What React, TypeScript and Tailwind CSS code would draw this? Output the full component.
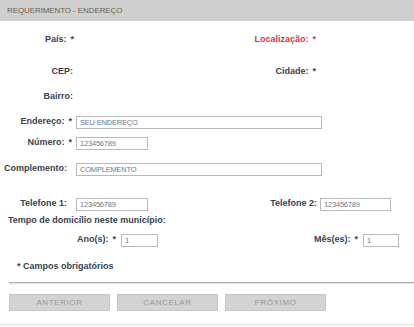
const label = 'text-[9px] font-bold text-[#38424f] whitespace-nowrap'
const req = 'ml-[4px] text-[#38424f]'
const input =
  'h-[13px] border border-[#b9b9b9] bg-white px-[3px] text-[7.5px] tracking-[-0.2px] leading-[11px] text-[#6b7a92] outline-none'

function Field({ value, w }: { value: string; w: string }) {
  return <input readOnly value={value} className={`${input} ${w}`} />
}

export default function App() {
  return (
    <div
      className="w-[414px] h-[327px] bg-white overflow-hidden"
      style={{ fontFamily: '"Liberation Sans", Arial, sans-serif' }}
    >
      <div className="h-[21px] bg-[#cfcfcf] flex items-center pl-[7px]">
        <span className="text-[8px] tracking-[-0.1px] text-[#6f6549]">REQUERIMENTO - ENDEREÇO</span>
      </div>

      {/* País / Localização */}
      <div className="mt-[10px] h-[18px] flex items-center">
        <div className={`w-[74px] text-right ${label}`}>
          País:<span className={req}>*</span>
        </div>
        <div className={`w-[242px] text-right ${label} !text-[#d23b3b]`}>
          Localização:<span className="ml-[4px]">*</span>
        </div>
      </div>

      {/* CEP / Cidade */}
      <div className="mt-[14px] h-[18px] flex items-center">
        <div className={`w-[73px] text-right ${label}`}>CEP:</div>
        <div className={`w-[243px] text-right ${label}`}>
          Cidade:<span className={req}>*</span>
        </div>
      </div>

      {/* Bairro */}
      <div className="mt-[7px] h-[18px] flex items-center">
        <div className={`w-[73px] text-right ${label}`}>Bairro:</div>
      </div>

      {/* Endereço */}
      <div className="mt-[8px] h-[16px] flex items-center">
        <div className={`w-[76px] pr-[4px] text-right ${label}`}>
          Endereço:<span className={req}>*</span>
        </div>
        <Field value="SEU ENDEREÇO" w="w-[246px]" />
      </div>

      {/* Número */}
      <div className="mt-[5px] h-[16px] flex items-center">
        <div className={`w-[76px] pr-[4px] text-right ${label}`}>
          Número:<span className={req}>*</span>
        </div>
        <Field value="123456789" w="w-[72px]" />
      </div>

      {/* Complemento */}
      <div className="mt-[10px] h-[16px] flex items-center">
        <div className={`w-[76px] pr-[9px] text-right ${label}`}>Complemento:</div>
        <Field value="COMPLEMENTO" w="w-[246px]" />
      </div>

      {/* Telefones */}
      <div className="mt-[19px] h-[16px] flex items-center">
        <div className={`w-[76px] pr-[9px] text-right ${label}`}>Telefone 1:</div>
        <Field value="123456789" w="w-[72px]" />
        <div className={`w-[172px] pr-[3px] text-right ${label}`}>Telefone 2:</div>
        <Field value="123456789" w="w-[71px]" />
      </div>

      <div className="mt-[2px] h-[14px] flex items-center pl-[8px]">
        <span className={label}>Tempo de domicílio neste município:</span>
      </div>

      {/* Ano / Mês */}
      <div className="mt-[4px] h-[16px] flex items-center">
        <div className={`w-[121px] pr-[5px] text-right ${label}`}>
          Ano(s):<span className={req}>*</span>
        </div>
        <Field value="1" w="w-[37px]" />
        <div className={`w-[205px] pr-[5px] text-right ${label}`}>
          Mês(es):<span className={req}>*</span>
        </div>
        <Field value="1" w="w-[36px]" />
      </div>

      <div className="mt-[11px] h-[16px] flex items-center pl-[17px]">
        <span className={label}>* Campos obrigatórios</span>
      </div>

      <div className="mt-[7px] ml-[9px] h-[2px] bg-[#b3b3b3] border-b border-[#dedede]" />

      <div className="mt-[10px] flex gap-[7px] pl-[9px]">
        {['ANTERIOR', 'CANCELAR', 'PRÓXIMO'].map((b) => (
          <button
            key={b}
            className="w-[101px] h-[17px] bg-[#d3d3d3] border border-[#c6c6c6] text-[8px] tracking-[0.6px] text-[#979797]"
          >
            {b}
          </button>
        ))}
      </div>

      <div className="mt-[13px] h-px bg-[#e4e4e4]" />
    </div>
  )
}
